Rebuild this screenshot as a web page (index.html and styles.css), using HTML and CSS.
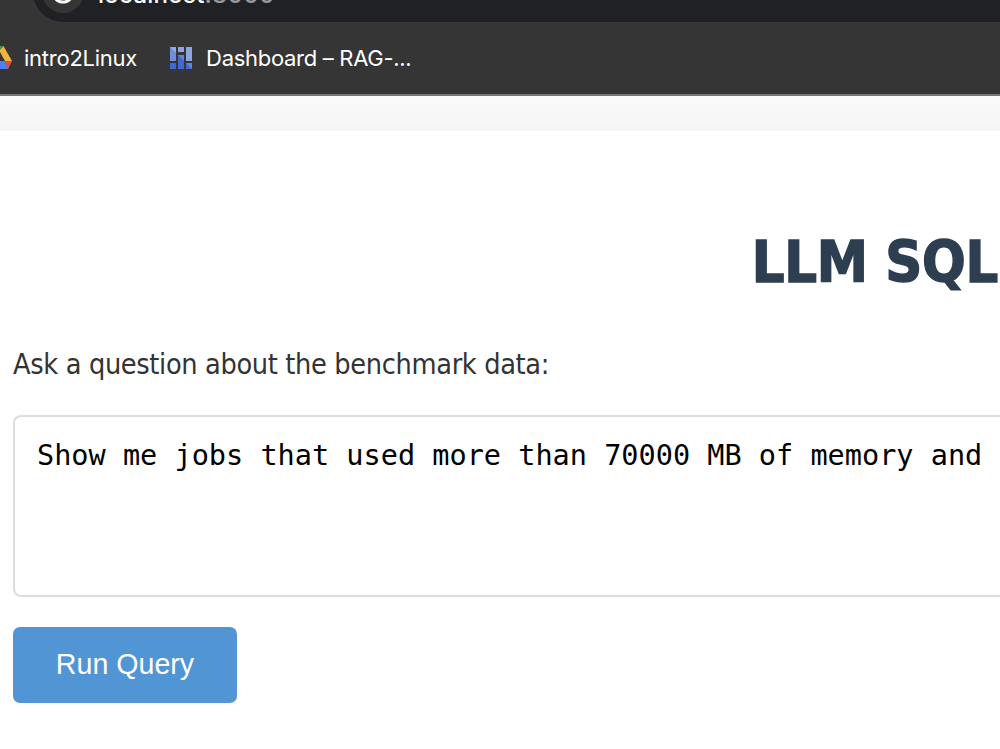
FILE: index.html
```
<!DOCTYPE html>
<html lang="en">

<head>
    <meta charset="UTF-8">
    <meta name="viewport" content="width=device-width, initial-scale=1.0">
    <title>LLM SQL</title>
    <link rel="stylesheet" href="styles.css">
</head>

<body>
    <header class="browser">
        <div class="toolbar">
            <div class="address-bar">
                <span class="site-info">
                    <svg width="24" height="24" viewBox="0 0 24 24">
                        <circle cx="12" cy="12" r="10" fill="none" stroke="#fff" stroke-width="3" />
                    </svg>
                </span>
                <span class="url">localhost<span class="port">:8000</span></span>
            </div>
        </div>
        <nav class="bookmarks">
            <a class="bookmark">
                <svg width="12" height="24" viewBox="0 0 12 24">
                    <path d="M-4 0H3L0 6L-5 8Z" fill="#34934d" />
                    <path d="M0 4L3.5 0L12 15H5L0 6Z" fill="#f3b33d" />
                    <path d="M-8 15H5L8.500 23H-8Z" fill="#4c82ee" />
                    <path d="M5 15H12L8 23Z" fill="#df5140" />
                </svg>
                <span class="drive-name">intro2Linux</span>
            </a>
            <a class="bookmark">
                <svg width="22" height="22" viewBox="0 0 22 22">
                    <path d="M0 0H6V14H0Z" fill="#718dd9" />
                    <path d="M0 0H6V6Z" fill="#92a8e4" />
                    <path d="M8 0H14V5H8Z M16 0H22V14H16Z" fill="#8fa5e0" />
                    <path d="M8 8H14V22H8Z M0 16H6V22H0Z M16 16H22V22H16Z" fill="#4067d3" />
                    <path d="M8 8H14V14Z M16 16H22V22Z" fill="#6583d9" />
                </svg>
                <span class="dashboard-name">Dashboard – RAG-...</span>
            </a>
        </nav>
    </header>

    <main class="container">
        <h1>LLM SQL</h1>
        <label for="question">Ask a question about the benchmark data:</label>
        <textarea id="question" spellcheck="false">Show me jobs that used more than 70000 MB of memory and</textarea>
        <button type="button">Run Query</button>
    </main>
</body>

</html>
```

FILE: styles.css
```
* {
    box-sizing: border-box;
}

body {
    display: flex;
    flex-direction: column;
    font-family: 'DejaVu Sans Condensed', 'DejaVu Sans', sans-serif;
    margin: 0;
    height: 749px;
    background-color: #f9f9f9;
    color: #333;
    overflow: hidden;
}

.browser {
    flex: none;
    height: 96px;
    margin-bottom: 35px;
    background-color: #353535;
    border-bottom: 2px solid #777;
    font-family: Inter, sans-serif;
    color: #fff;
    z-index: 1;
}

.toolbar {
    display: flex;
    align-items: flex-end;
    height: 22px;
    padding-left: 33px;
    overflow: hidden;
}

.address-bar {
    display: flex;
    flex: 1;
    align-items: center;
    height: 60px;
    padding-left: 9px;
    background-color: #202125;
    border-radius: 30px 0 0 30px;
}

.site-info {
    display: flex;
    align-items: center;
    justify-content: center;
    width: 42px;
    height: 42px;
    margin-right: 14px;
    background-color: #353535;
    border-radius: 50%;
}

.url {
    padding-top: 5px;
    font-size: 24px;
    font-weight: 500;
    line-height: 30px;
    letter-spacing: 0.25px;
}

.port {
    color: #999;
}

.bookmarks {
    display: flex;
    align-items: center;
    gap: 33px;
    height: 71px;
}

.bookmark {
    display: flex;
    align-items: center;
    font-size: 22px;
    line-height: 30px;
    letter-spacing: -0.25px;
    white-space: nowrap;
}

.drive-name {
    margin-left: 12px;
}

.dashboard-name {
    margin-left: 14px;
    letter-spacing: -0.3px;
}

.container {
    flex: 1;
    margin: 0 -40px;
    padding: 95px 40px 0 53px;
    background-color: #fff;
    box-shadow: 0 0 30px rgba(0, 0, 0, 0.04);
}

h1 {
    margin: 0;
    padding-right: 2px;
    font-size: 57.2px;
    line-height: 72px;
    letter-spacing: -0.3px;
    text-align: right;
    white-space: nowrap;
    color: #2c3e50;
    -webkit-text-stroke: 1.4px #2c3e50;
}

label {
    display: block;
    margin-top: 48px;
    font-size: 28.6px;
    line-height: 36px;
    letter-spacing: -0.35px;
}

textarea {
    display: block;
    width: 100%;
    height: 182px;
    margin-top: 33px;
    padding: 21px 0 20px 22px;
    border: 2px solid #ddd;
    border-right: none;
    border-radius: 8px 0 0 8px;
    font-family: 'DejaVu Sans Mono', monospace;
    font-size: 28.55px;
    line-height: 34px;
    color: #000;
    resize: none;
}

button {
    width: 224px;
    height: 76px;
    margin-top: 30px;
    padding: 0 0 2px;
    border: none;
    border-radius: 7px;
    background-color: #5295d5;
    font-family: 'Liberation Sans', Arial, sans-serif;
    font-size: 28.6px;
    color: #fff;
}
```
